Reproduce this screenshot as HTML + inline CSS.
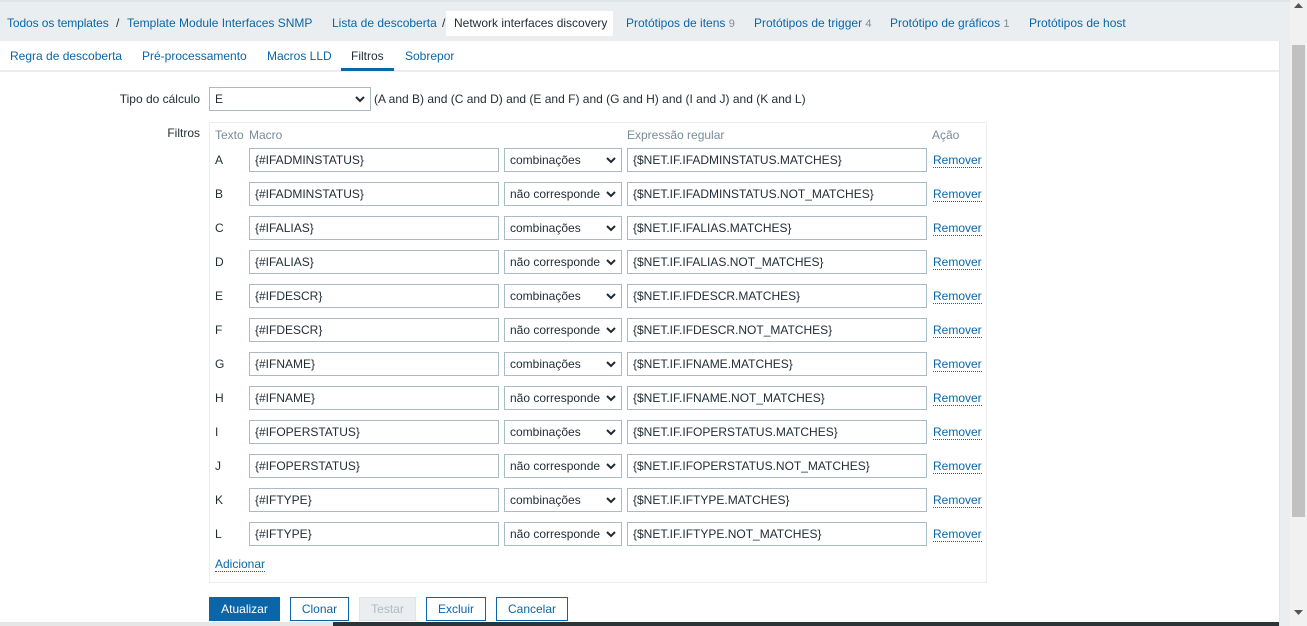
<!DOCTYPE html>
<html><head><meta charset="utf-8"><style>
*{box-sizing:border-box;margin:0;padding:0}
body{width:1307px;height:626px;overflow:hidden;background:#fff;font-family:"Liberation Sans",Arial,sans-serif;font-size:12px;color:#1f2c33;position:relative}
a{color:#0a66a8;text-decoration:none}
.hdr{position:absolute;left:0;top:0;width:1290px;height:41px;background:#ebeef0;border-top:2px solid #dfe4e7}
.hdr span{position:absolute;top:14px;color:#0a66a8;white-space:nowrap}
.hdr .cnt{color:#768d99;font-size:11px}
.cur{position:absolute;left:446px;top:9px;height:25px;width:167px;background:#fff}
.tabs{position:absolute;left:0;top:41px;width:1280px;height:31px;border-bottom:2px solid #ebeef0;background:#fff}
.tabs span{position:absolute;top:8px;color:#0a66a8}
.side{position:absolute;left:1279px;top:41px;width:11px;height:585px;background:#ebeef0;border-left:1px solid #dfe4e7}
.sb{position:absolute;left:1290px;top:0;width:17px;height:626px;background:#f1f1f1}
.thumb{position:absolute;left:1292px;top:45px;width:13px;height:472px;background:#c1c1c1}
.bot{position:absolute;left:0;top:622px;width:1279px;height:4px;background:#e6e6e6}
.bot2{position:absolute;left:333px;top:622px;width:946px;height:4px;background:#2b3438}
.lbl{position:absolute;text-align:right;width:200px}
.sel,.inp{position:absolute;height:24px;border:1px solid #abbbc3;background:#fff;padding:4px 5px;white-space:nowrap;overflow:hidden}
.sel svg{position:absolute;right:5px;top:8px}
.box{position:absolute;left:209px;top:122px;width:778px;height:461px;border:1px solid #ebeef0}
.gh{position:absolute;top:128px;color:#768d99}
.rl{position:absolute;left:215px}
.rm{position:absolute;left:933px;color:#0a66a8;border-bottom:1px dotted #0a66a8;line-height:14px}
.btn{position:absolute;top:597px;height:24px;border:1px solid #0a66a8;color:#0a66a8;background:#fff;text-align:center;line-height:22px}
</style></head><body>
<div class="hdr">
<div class="cur"></div>
<span style="left:7px;letter-spacing:-0.1px">Todos os templates</span><span style="left:116px;color:#1f2c33">/</span>
<span style="left:127px">Template Module Interfaces SNMP</span>
<span style="left:332px">Lista de descoberta</span><span style="left:442px;color:#1f2c33">/</span>
<span style="left:454px;color:#1f2c33">Network interfaces discovery</span>
<span style="left:626px">Protótipos de itens <i class="cnt" style="font-style:normal">9</i></span>
<span style="left:754px">Protótipos de trigger <i class="cnt" style="font-style:normal">4</i></span>
<span style="left:890px">Protótipo de gráficos <i class="cnt" style="font-style:normal">1</i></span>
<span style="left:1029px">Protótipos de host</span>
</div>
<div class="tabs">
<span style="left:10px">Regra de descoberta</span>
<span style="left:142px">Pré-processamento</span>
<span style="left:267px">Macros LLD</span>
<span style="left:351px;color:#1f2c33">Filtros</span>
<span style="left:405px">Sobrepor</span>
<div style="position:absolute;left:341px;top:27px;width:53px;height:3px;background:#0a66a8"></div>
</div>
<div class="side"></div>
<div class="sb"></div><div class="thumb"></div>
<svg style="position:absolute;left:1294px;top:3px" width="9" height="6"><path d="M0 5L4.5 0L9 5Z" fill="#555"/></svg>
<svg style="position:absolute;left:1294px;top:610px" width="9" height="6"><path d="M0 0L9 0L4.5 5Z" fill="#555"/></svg>
<div class="bot"></div><div class="bot2"></div>

<div class="lbl" style="left:0;top:92px">Tipo do cálculo</div>
<div class="sel" style="left:209px;top:87px;width:162px">E<svg width="10" height="7"><path d="M1 1L5 5L9 1" stroke="#1f2c33" stroke-width="2" fill="none"/></svg></div>
<div style="position:absolute;left:374px;top:92px">(A and B) and (C and D) and (E and F) and (G and H) and (I and J) and (K and L)</div>
<div class="lbl" style="left:0;top:126px">Filtros</div>
<div class="box"></div>
<div class="gh" style="left:215px">Texto</div><div class="gh" style="left:249px">Macro</div>
<div class="gh" style="left:627px">Expressão regular</div><div class="gh" style="left:932px">Ação</div>
<div id="rows"></div>
<a style="position:absolute;left:215px;top:557px;border-bottom:1px dotted #0a66a8;line-height:14px">Adicionar</a>
<div class="btn" style="left:209px;width:71px;background:#0a66a8;color:#fff">Atualizar</div>
<div class="btn" style="left:290px;width:59px">Clonar</div>
<div class="btn" style="left:359px;width:57px;border-color:#dfe4e7;background:#ebeef0;color:#acbbc2">Testar</div>
<div class="btn" style="left:426px;width:60px">Excluir</div>
<div class="btn" style="left:496px;width:72px">Cancelar</div>
<script>
var d=[["A","{#IFADMINSTATUS}",0,"{$NET.IF.IFADMINSTATUS.MATCHES}"],["B","{#IFADMINSTATUS}",1,"{$NET.IF.IFADMINSTATUS.NOT_MATCHES}"],["C","{#IFALIAS}",0,"{$NET.IF.IFALIAS.MATCHES}"],["D","{#IFALIAS}",1,"{$NET.IF.IFALIAS.NOT_MATCHES}"],["E","{#IFDESCR}",0,"{$NET.IF.IFDESCR.MATCHES}"],["F","{#IFDESCR}",1,"{$NET.IF.IFDESCR.NOT_MATCHES}"],["G","{#IFNAME}",0,"{$NET.IF.IFNAME.MATCHES}"],["H","{#IFNAME}",1,"{$NET.IF.IFNAME.NOT_MATCHES}"],["I","{#IFOPERSTATUS}",0,"{$NET.IF.IFOPERSTATUS.MATCHES}"],["J","{#IFOPERSTATUS}",1,"{$NET.IF.IFOPERSTATUS.NOT_MATCHES}"],["K","{#IFTYPE}",0,"{$NET.IF.IFTYPE.MATCHES}"],["L","{#IFTYPE}",1,"{$NET.IF.IFTYPE.NOT_MATCHES}"]];
var h="";d.forEach(function(r,i){var y=148+i*34;
h+='<div class="rl" style="top:'+(y+5)+'px">'+r[0]+'</div>';
h+='<div class="inp" style="left:249px;top:'+y+'px;width:250px">'+r[1]+'</div>';
h+='<div class="sel" style="left:504px;top:'+y+'px;width:118px">'+(r[2]?'não corresponde':'combinações')+'<svg width="10" height="7"><path d="M1 1L5 5L9 1" stroke="#1f2c33" stroke-width="2" fill="none"/></svg></div>';
h+='<div class="inp" style="left:627px;top:'+y+'px;width:300px">'+r[3]+'</div>';
h+='<a class="rm" style="top:'+(y+5)+'px">Remover</a>';});
document.getElementById("rows").innerHTML=h;
</script>
</body></html>
